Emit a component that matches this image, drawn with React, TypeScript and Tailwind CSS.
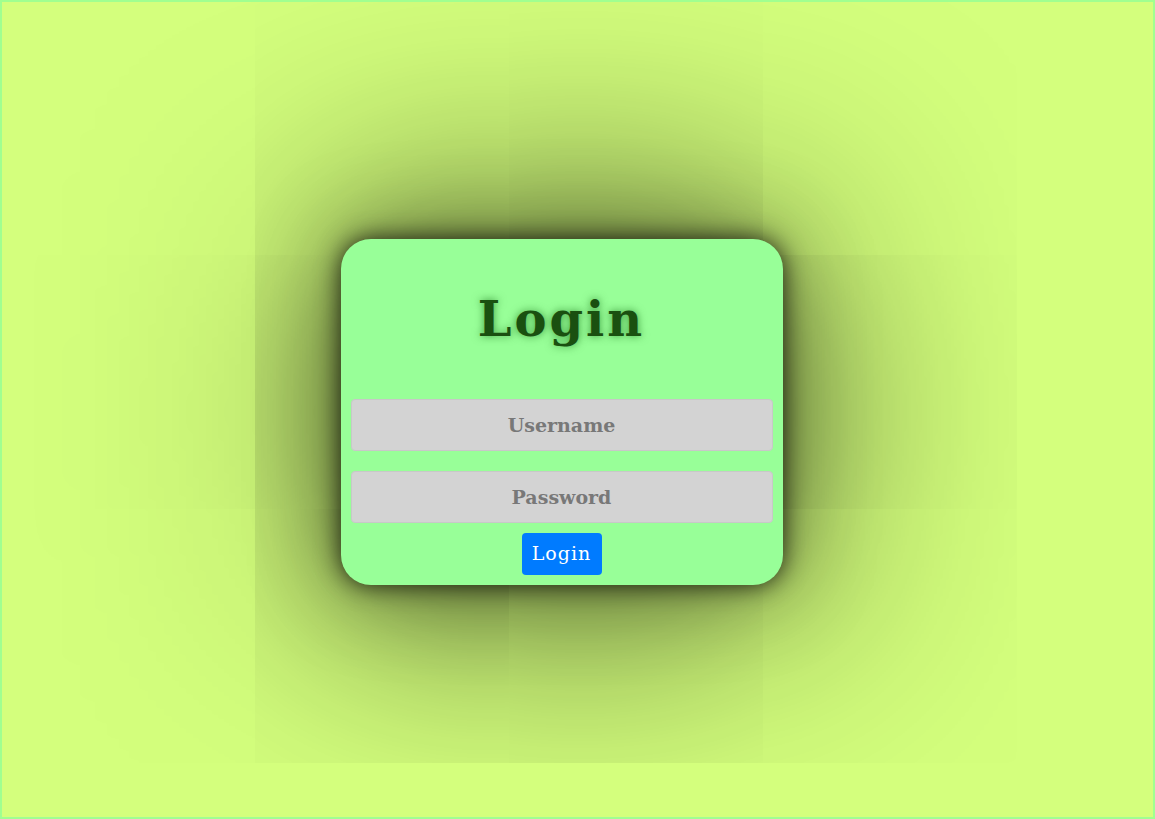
import React from "react";

export default function App() {
  return (
    <div
      className="w-[1155px] h-[819px] border-2 border-[#a0ff90] bg-[#d4ff7d] flex items-center justify-center overflow-hidden pr-[32px] pt-[4px]"
      style={{ fontFamily: '"DejaVu Serif", serif' }}
    >
      <div className="w-[442px] h-[346px] shrink-0 rounded-[30px] bg-[#98ff98] px-[10px] pb-[10px] flex flex-col items-center shadow-[0_0_24px_rgba(0,0,0,0.8),0_0_90px_rgba(0,0,0,0.45),0_0_480px_rgba(0,0,0,0.9)]">
        <h1 className="mt-[48px] h-[64px] text-[48px] leading-[64px] font-bold text-[#1a5010] tracking-[3px] [text-shadow:0_0_8px_rgba(0,90,0,0.6)]">
          Login
        </h1>
        <input
          placeholder="Username"
          className="mt-[48px] w-[422px] h-[52px] shrink-0 rounded-[4px] border border-[#c8c8c8] bg-[#d3d3d3] text-center text-[19px] font-bold placeholder:text-[#787878] outline-none"
        />
        <input
          placeholder="Password"
          type="password"
          className="mt-[20px] w-[422px] h-[52px] shrink-0 rounded-[4px] border border-[#c8c8c8] bg-[#d3d3d3] text-center text-[19px] font-bold placeholder:text-[#787878] outline-none"
        />
        <button className="mt-[10px] w-[80px] h-[42px] shrink-0 rounded-[4px] bg-[#007bff] text-white text-[19px] tracking-[1px]">
          Login
        </button>
      </div>
    </div>
  );
}
